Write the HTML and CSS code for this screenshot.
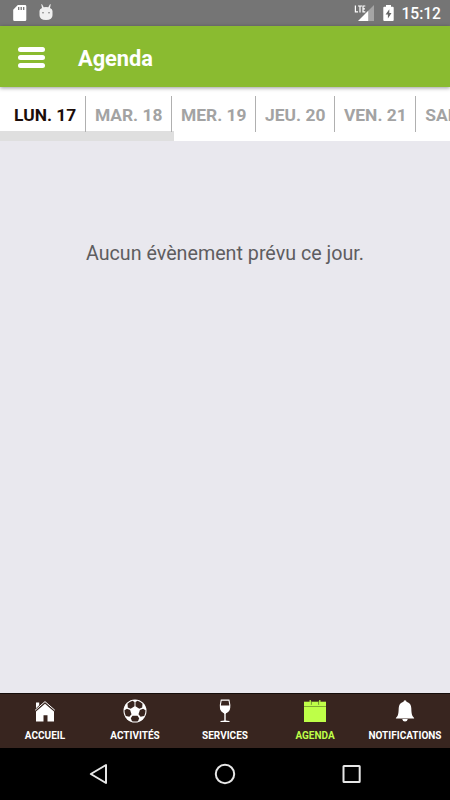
FILE: index.html
```html
<!DOCTYPE html>
<html lang="fr">
  <head>
    <meta charset="UTF-8" />
    <meta name="viewport" content="width=device-width, initial-scale=1.0" />
    <title>Agenda</title>
    <link rel="stylesheet" href="styles.css">
  </head>
  <body>
    <div class="status-bar">
      <svg class="sd-icon" width="14" height="17" viewBox="0 0 14 17">
        <path fill="#fff" d="M4.800 0H12a1.300 1.300 0 0 1 1.300 1.300v13.400A1.300 1.300 0 0 1 12 16H1.500A1.300 1.300 0 0 1 .2 14.700V4.700z" />
        <path stroke="#757575" stroke-width="1.300" d="M5.700 2v3M8.200 2v3M10.700 2v3" />
      </svg>
      <svg class="droid-icon" width="14" height="17" viewBox="0 0 14 17">
        <path fill="#f0f0f0" d="M2.900 0l1.800 3.200q2.300-.6 4.600 0L11.100 0l.6.400-.7 3.600q2.500 1 2.500 3v4.300q0 4.700-6.500 4.700T.5 11.300V7q0-2 2.500-3L2.300.4z" />
        <circle cx="4" cy="8.700" r=".8" fill="#757575" />
        <circle cx="10" cy="8.700" r=".8" fill="#757575" />
      </svg>
      <svg class="signal-icon" width="21" height="18" viewBox="0 0 21 18">
        <path fill="#a5a5a5" d="M20 1v16h-6V7z" />
        <path fill="#fff" d="M14.200 6.800V17H4z" />
        <path fill="none" stroke="#fff" stroke-width="1.200" d="M1.400 1.500v6.400H4M4 2h4M6 2v6.400M11.300 2H9v5.900h2.300M9 4.900h2" />
      </svg>
      <svg class="battery-icon" width="11" height="17" viewBox="0 0 11 17">
        <path fill="#fff" d="M3 0h5v1.700h1.700q1 0 1 1v12.300q0 1-1 1H1.300q-1 0-1-1V2.700q0-1 1-1H3z" />
        <path fill="#666" d="M6.300 4.200L2.600 9.600h2.300v4l3.600-5.700H6.300z" />
      </svg>
      <span class="clock">15:12</span>
    </div>

    <header class="header">
      <div class="menu-button"><span></span><span></span><span></span></div>
      <h1>Agenda</h1>
    </header>

    <div class="days">
      <div class="day active">LUN. 17</div>
      <div class="day">MAR. 18</div>
      <div class="day">MER. 19</div>
      <div class="day">JEU. 20</div>
      <div class="day">VEN. 21</div>
      <div class="day">SAM. 22</div>
    </div>

    <main class="content">
      <p>Aucun évènement prévu ce jour.</p>
    </main>

    <nav class="tabs">
      <div class="tab">
        <svg width="24" height="24" viewBox="0 0 24 24">
          <path fill="#fff" d="M3 12.400L12 4.800l9 7.600V22.600h-6.500v-6.300h-4v6.300H3z" />
          <path fill="#fff" d="M3 3.600h3.200v2.700L3 9.200z" />
          <path fill="none" stroke="#fff" stroke-width="1" d="M2.200 11.200L12 2.600l9.800 8.600" />
        </svg>
        <span>ACCUEIL</span>
      </div>
      <div class="tab">
        <svg width="24" height="24" viewBox="0 0 24 24">
          <circle cx="12" cy="12" r="11.500" fill="#fff" />
          <g fill="#38251f">
            <path d="M9.500 1.700L11.500 3v4.200L7.700 9.800 4.800 8.600 4.500 4.800Q6.500 2.500 9.500 1.700z" />
            <path d="M14.500 1.700L12.500 3v4.200l3.800 2.600 2.900-1.200.3-3.800Q17.500 2.500 14.500 1.700z" />
            <path d="M1.500 11.300l2.400-1.500 3.200 1.300 1.400 4.200-2.100 2.400-3.600-.6Q1.400 14.500 1.500 11.300z" />
            <path d="M22.500 11.300l-2.400-1.500-3.200 1.300-1.400 4.200 2.100 2.400 3.600-.6q1.400-2.600 1.300-5.800z" />
            <path d="M9.500 16.700h5l1.700 2.500-1.200 3q-3 .8-6 0l-1.200-3z" />
          </g>
        </svg>
        <span>ACTIVITÉS</span>
      </div>
      <div class="tab">
        <svg width="24" height="24" viewBox="0 0 24 24">
          <path fill="none" stroke="#fff" stroke-width="1.100" d="M8.200 1.100h7.800q2.400 10-2 12h-3.800Q5.800 11 8.200 1.100z" />
          <path fill="#fff" d="M7 6.500h10q.3 4.500-2.300 6.500-1.700.8-2 2v6.500q1 .3 3.800.4v1h-9v-1q2.800-.1 3.800-.4V15q-.3-1.200-2-2Q6.700 11 7 6.500z" />
        </svg>
        <span>SERVICES</span>
      </div>
      <div class="tab active">
        <svg width="24" height="24" viewBox="0 0 24 24">
          <path fill="#beff48" d="M1 2.700h22V23H1z" />
          <path stroke="#70952e" stroke-width=".8" d="M1 7.500h22" />
          <path fill="none" stroke="#5d7a2a" stroke-width="1" d="M8.200 2.500v3.300M15.800 2.500v3.300" />
          <path fill="none" stroke="#beff48" stroke-width="1.200" d="M7.200 1v4.800M16.800 1v4.800" />
        </svg>
        <span>AGENDA</span>
      </div>
      <div class="tab">
        <svg width="24" height="24" viewBox="0 0 24 24">
          <path fill="#fff" d="M12 1.200q1.500 0 1.500 1.600 4.700 1.300 4.800 6.500.1 6 1.200 7.700l1.600 2v.6H2.900V19l1.600-2q1.100-1.700 1.200-7.700.1-5.200 4.800-6.500 0-1.600 1.500-1.600z" />
          <path fill="#fff" d="M9.200 20h5.600q-.5 2.500-2.800 2.500T9.200 20z" />
        </svg>
        <span>NOTIFICATIONS</span>
      </div>
    </nav>

    <div class="system-nav">
      <svg width="22" height="22" viewBox="0 0 22 22">
        <path d="M19 2v18L3.800 11z" />
      </svg>
      <svg width="22" height="22" viewBox="0 0 22 22">
        <circle cx="11" cy="11" r="9.200" />
      </svg>
      <svg width="22" height="22" viewBox="0 0 22 22">
        <rect x="2.500" y="3" width="16.200" height="16" rx=".5" />
      </svg>
    </div>
  </body>
</html>
```

FILE: styles.css
```css
* {
  box-sizing: border-box;
}
body {
  margin: 0;
  height: 100vh;
  display: flex;
  flex-direction: column;
  overflow: hidden;
  font-family: Roboto, sans-serif;
  background-color: #e9e8ee;
}
svg {
  display: block;
  flex: none;
}
.status-bar {
  flex: none;
  height: 26px;
  display: flex;
  align-items: flex-start;
  padding: 5px 9px 0 13px;
  background-color: #757575;
  color: #fff;
}
.droid-icon {
  margin-left: 12px;
  margin-top: -1px;
}
.signal-icon {
  margin-left: auto;
  margin-top: -1px;
}
.battery-icon {
  margin-left: 8px;
}
.clock {
  margin-left: 7px;
  font-size: 15.6px;
  font-weight: 500;
  line-height: 18px;
}
.header {
  flex: none;
  height: 61px;
  display: flex;
  align-items: center;
  padding: 4px 18px 0;
  background-color: #8abb30;
  box-shadow: 0 1px 4px rgba(0, 0, 0, 0.4);
  z-index: 1;
}
.menu-button {
  width: 27px;
  display: flex;
  flex-direction: column;
  gap: 3px;
  margin-top: -3px;
}
.menu-button span {
  height: 5px;
  border-radius: 3px;
  background-color: #fff;
}
.header h1 {
  margin: 0 0 0 33px;
  font-size: 21.8px;
  font-weight: 700;
  line-height: 26px;
  color: #fff;
}
.days {
  flex: none;
  height: 54px;
  display: flex;
  padding: 9px 0 0 5px;
  overflow: hidden;
  /* grey strip under the first days */
  background: linear-gradient(#dfdfdf, #dfdfdf) left bottom / 174px 10.5px no-repeat #fff;
}
.day {
  flex: none;
  height: 36px;
  padding: 0 8.5px 0 9.1px;
  border-right: 1px solid #b0b0b0;
  font-size: 17.4px;
  font-weight: 700;
  line-height: 38px;
  color: #a3a3a3;
  white-space: nowrap;
}
.day.active {
  color: #1c0d0a;
}
.content {
  flex: 1;
  padding-top: 100px;
  text-align: center;
}
.content p {
  margin: 0;
  font-size: 19.7px;
  line-height: 26px;
  color: #5e5d60;
}
.tabs {
  flex: none;
  height: 55px;
  display: grid;
  grid-template-columns: repeat(5, 1fr);
  background-color: #38251f;
  border-top: 1px solid #150d0a;
}
.tab {
  display: flex;
  flex-direction: column;
  align-items: center;
  padding-top: 5px;
  font-size: 10px;
  font-weight: 700;
  line-height: 12px;
  color: #fff;
}
.tab span {
  margin-top: 7px;
}
.tab.active {
  color: #beff48;
}
.system-nav {
  flex: none;
  height: 52px;
  display: flex;
  justify-content: space-between;
  align-items: center;
  padding: 0 87px;
  background-color: #000;
}
.system-nav svg {
  fill: none;
  stroke: #e6e6e6;
  stroke-width: 2;
  stroke-linejoin: round;
}
```
